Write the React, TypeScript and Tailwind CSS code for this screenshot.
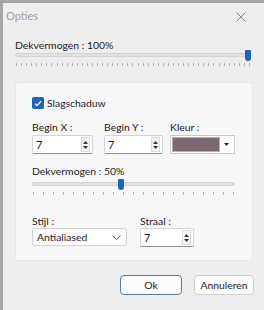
import React from "react";

function Ticks({ n }: { n: number }) {
  return (
    <div className="absolute left-[1px] right-[1px] flex justify-between" style={{ top: 0 }}>
      {Array.from({ length: n }).map((_, i) => (
        <span key={i} className="block w-px h-[3px] bg-[#b4b4b4]" />
      ))}
    </div>
  );
}

function Slider({ pct, n, w }: { pct: number; n: number; w: number }) {
  return (
    <div className="relative h-[18px]" style={{ width: w }}>
      <div className="absolute left-0 right-0 top-[3px] h-[4px] rounded-[2px] bg-[#e2e2e2] border border-[#d4d4d4]" />
      <div
        className="absolute top-0 w-[6px] h-[11px] bg-[#1b64c0] rounded-b-[3px] rounded-t-[1px]"
        style={{ left: `calc(${pct}% - ${pct === 100 ? 6 : 3}px)` }}
      />
      <div className="absolute left-0 right-0 top-[13px]">
        <Ticks n={n} />
      </div>
    </div>
  );
}

function Spin({ w, v }: { w: number; v: string }) {
  return (
    <div
      className="flex items-center h-[19px] bg-white border border-[#d3d3d3] border-b-[#8d8d8d] rounded-[2px] pl-[3px] pr-[2px]"
      style={{ width: w }}
    >
      <span className="flex-1 text-[11px] leading-[14px] text-[#1a1a1a]">{v}</span>
      <div className="flex flex-col items-center justify-center w-[9px] h-[15px] border border-[#dadada] bg-[#f7f7f7]">
        <svg width="5" height="3" viewBox="0 0 5 3" className="mb-[2px]"><path d="M0 3 L2.5 0 L5 3 Z" fill="#333" /></svg>
        <svg width="5" height="3" viewBox="0 0 5 3"><path d="M0 0 L2.5 3 L5 0 Z" fill="#333" /></svg>
      </div>
    </div>
  );
}

export default function App() {
  return (
    <div className="w-[264px] h-[310px] overflow-hidden bg-[#eeeeee] border-t-[3px] border-l-[3px] border-[#a6a6a6] flex flex-col font-['Lato',sans-serif] text-[#1a1a1a]">
      <div className="h-[27px] flex items-center justify-between pl-[3px] pr-[18px]">
        <span className="text-[11px] text-[#a2a2a2]">Opties</span>
        <svg width="10" height="10" viewBox="0 0 10 10">
          <path d="M0.5 0.5 L9.5 9.5 M9.5 0.5 L0.5 9.5" stroke="#8a8a8a" strokeWidth="1" />
        </svg>
      </div>

      <div className="pl-[12px] flex flex-col">
        <div className="mt-[8px] text-[10.4px] leading-[14px]">Dekvermogen : 100%</div>
        <div className="mt-[-2px]">
          <Slider pct={100} n={47} w={236} />
        </div>

        <div className="mt-[14px] w-[238px] h-[179px] bg-[#f7f7f7] border border-[#e6e6e6] rounded-[3px] pl-[16px] pt-[14px] flex flex-col">
          <div className="flex items-center h-[12px]">
            <div className="w-[12px] h-[12px] rounded-[2px] bg-[#1b64c0] flex items-center justify-center">
              <svg width="8" height="7" viewBox="0 0 8 7"><path d="M1 3.6 L3 5.6 L7 1.2" stroke="white" strokeWidth="1.3" fill="none" /></svg>
            </div>
            <span className="ml-[3px] text-[10.4px] leading-[14px]">Slagschaduw</span>
          </div>

          <div className="mt-[11px] flex">
            <div className="flex flex-col w-[61px]">
              <span className="text-[10.4px] leading-[14px]">Begin X :</span>
              <div className="mt-[1px]"><Spin w={61} v="7" /></div>
            </div>
            <div className="flex flex-col w-[59px] ml-[11px]">
              <span className="text-[10.4px] leading-[14px]">Begin Y :</span>
              <div className="mt-[1px]"><Spin w={59} v="7" /></div>
            </div>
            <div className="flex flex-col w-[65px] ml-[7px]">
              <span className="text-[10.4px] leading-[14px]">Kleur :</span>
              <div className="mt-[1px] flex items-center h-[19px] w-[65px] bg-white border border-[#c9c9c9] p-[1px]">
                <div className="w-[48px] h-[15px] bg-[#7c6873] border border-[#b9aeb3]" />
                <div className="flex-1 flex items-center justify-center">
                  <svg width="5" height="3" viewBox="0 0 5 3"><path d="M0 0 L2.5 3 L5 0 Z" fill="#222" /></svg>
                </div>
              </div>
            </div>
          </div>

          <div className="mt-[10px] text-[10.4px] leading-[14px]">Dekvermogen : 50%</div>
          <div className="mt-[1px]">
            <Slider pct={44} n={21} w={203} />
          </div>

          <div className="mt-[17px] flex">
            <div className="flex flex-col w-[95px]">
              <span className="text-[10.4px] leading-[14px]">Stijl :</span>
              <div className="mt-0 flex items-center h-[18px] bg-white border border-[#d0d0d0] rounded-[3px] pl-[4px] pr-[5px]">
                <span className="flex-1 text-[10.4px] leading-[14px]">Antialiased</span>
                <svg width="9" height="5" viewBox="0 0 9 5"><path d="M0.5 0.5 L4.5 4.5 L8.5 0.5" stroke="#555" strokeWidth="1" fill="none" /></svg>
              </div>
            </div>
            <div className="flex flex-col w-[54px] ml-[13px]">
              <span className="text-[10.4px] leading-[14px]">Straal :</span>
              <div className="mt-0"><Spin w={54} v="7" /></div>
            </div>
          </div>
        </div>

        <div className="mt-[14px] flex justify-end pr-[10px] gap-[12px]">
          <button className="w-[62px] h-[20px] rounded-[4px] bg-[#fbfbfb] border-[1.5px] border-[#5b7d9c] text-[10.4px] leading-[14px]">Ok</button>
          <button className="w-[60px] h-[20px] rounded-[4px] bg-[#fdfdfd] border border-[#d0d0d0] text-[10.4px] leading-[14px]">Annuleren</button>
        </div>
      </div>
    </div>
  );
}
